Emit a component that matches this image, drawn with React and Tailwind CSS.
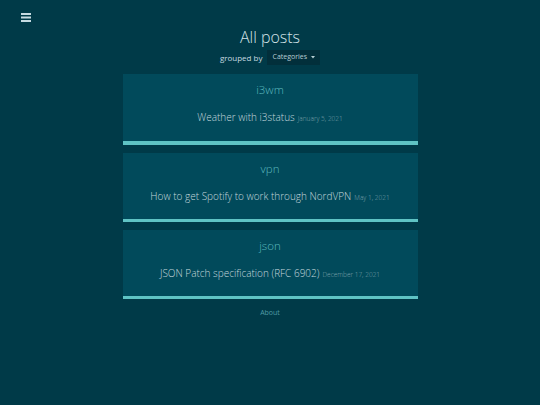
import React from "react";

const posts = [
  { cat: "i3wm", title: "Weather with i3status", date: "January 5, 2021", thick: true },
  { cat: "vpn", title: "How to get Spotify to work through NordVPN", date: "May 1, 2021" },
  { cat: "json", title: "JSON Patch specification (RFC 6902)", date: "December 17, 2021" },
];

export default function App() {
  return (
    <div className="min-h-[405px] w-full bg-[#003a48] text-[#c9dde2] font-light" style={{ fontFamily: '"Open Sans", sans-serif' }}>
      <div className="px-[21px] pt-[13px] h-[22px]">
        <svg width="10" height="9" viewBox="0 0 10 9">
          <rect x="0" y="0" width="10" height="2" fill="#c6dbe2" />
          <rect x="0" y="3.5" width="10" height="2" fill="#c6dbe2" />
          <rect x="0" y="7" width="10" height="2" fill="#c6dbe2" />
        </svg>
      </div>
      <div className="flex flex-col items-center">
        <h1 className="text-[16px] leading-[20px] mt-[5px] text-[#d3e3e7]">All posts</h1>
        <div className="flex items-center gap-[5px] mt-[3px] text-[8px]">
          <span className="text-[#c6dbe0] font-normal">grouped by</span>
          <div className="flex items-center gap-[4px] bg-[#022f3b] px-[5px] h-[15px] text-[7px] text-[#b7cdd3] font-normal">
            <span>Categories</span>
            <svg width="4" height="3" viewBox="0 0 4 3"><path d="M0 0 L4 0 L2 2.5 Z" fill="#b7cdd3" /></svg>
          </div>
        </div>
      </div>
      <div className="mt-[9px] mx-auto w-[295px] flex flex-col gap-[8px]">
        {posts.map((p) => (
          <div key={p.cat} className={`bg-[#014a5b] flex flex-col items-center ${p.thick ? "h-[71px] border-b-[4px]" : "h-[69px] border-b-[3px]"} border-[#5fc3c4]`}>
            <div className="mt-[8px] text-[11.5px] leading-[16px] text-[#5bb8be]">{p.cat}</div>
            <div className="mt-[12px] text-[10px] leading-[14px] text-[#c3d7dc] flex items-baseline gap-[3px]">
              <span>{p.title}</span>
              <span className="text-[6.5px] text-[#7fa2ab]">{p.date}</span>
            </div>
          </div>
        ))}
      </div>
      <div className="text-center mt-[9px] text-[7px] text-[#4f9aa6] font-normal">About</div>
    </div>
  );
}
